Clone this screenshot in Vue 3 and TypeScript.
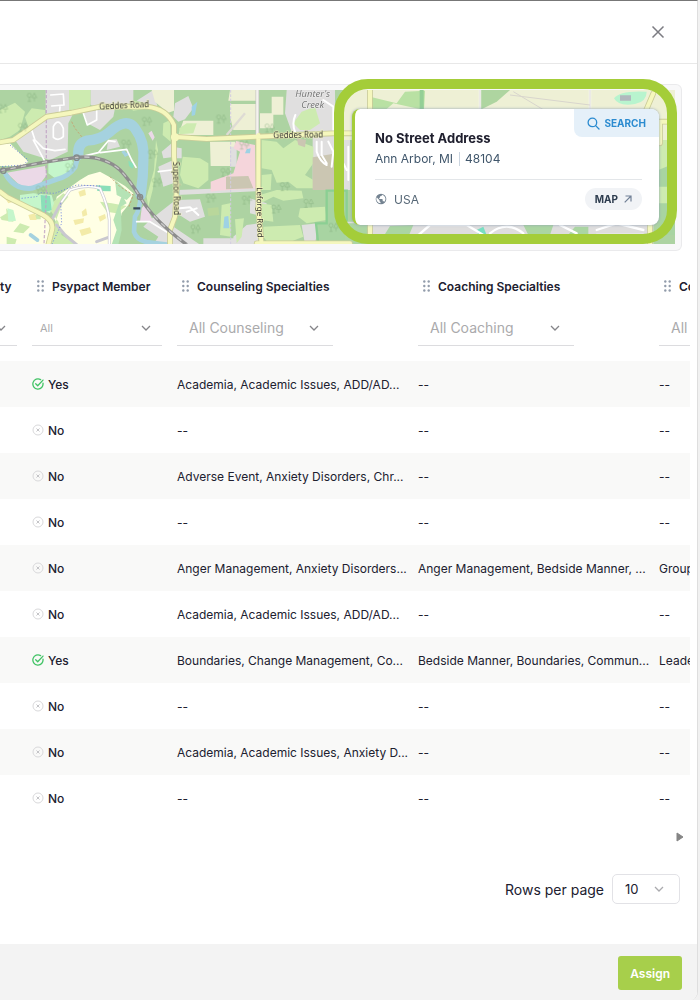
<script setup lang="ts">
import { ref } from 'vue'

interface ProviderRow {
  psypact: boolean
  counseling: string
  coaching: string
  consulting: string
}

interface FilterColumn {
  id: string
  title: string
  placeholder: string
  small?: boolean
}

const columns: FilterColumn[] = [
  { id: 'psypact', title: 'Psypact Member', placeholder: 'All', small: true },
  { id: 'counseling', title: 'Counseling Specialties', placeholder: 'All Counseling' },
  { id: 'coaching', title: 'Coaching Specialties', placeholder: 'All Coaching' },
  { id: 'more', title: 'Co', placeholder: 'All' },
]

const none = '--'
const rows: ProviderRow[] = [
  { psypact: true, counseling: 'Academia, Academic Issues, ADD/AD...', coaching: none, consulting: none },
  { psypact: false, counseling: none, coaching: none, consulting: none },
  { psypact: false, counseling: 'Adverse Event, Anxiety Disorders, Chr...', coaching: none, consulting: none },
  { psypact: false, counseling: none, coaching: none, consulting: none },
  { psypact: false, counseling: 'Anger Management, Anxiety Disorders...', coaching: 'Anger Management, Bedside Manner, ...', consulting: 'Group' },
  { psypact: false, counseling: 'Academia, Academic Issues, ADD/AD...', coaching: none, consulting: none },
  { psypact: true, counseling: 'Boundaries, Change Management, Co...', coaching: 'Bedside Manner, Boundaries, Commun...', consulting: 'Leade' },
  { psypact: false, counseling: none, coaching: none, consulting: none },
  { psypact: false, counseling: 'Academia, Academic Issues, Anxiety D...', coaching: none, consulting: none },
  { psypact: false, counseling: none, coaching: none, consulting: none },
]

const pageSize = ref('10')
</script>

<template>
  <main class="dialog">
    <header class="dialog-head">
      <button class="close" type="button" aria-label="Close">
        <svg width="14" height="14" viewBox="0 0 14 14"><path d="M1.500 1.500 12.500 12.500M12.500 1.500 1.500 12.500" fill="none" stroke="#7c7c82" stroke-width="1.500" /></svg>
      </button>
    </header>

    <section class="map-panel">
      <div class="map">
        <svg class="tiles" viewBox="0 30 2025 464" preserveAspectRatio="xMinYMin slice" aria-hidden="true">
          <rect y="30" width="2100" height="470" fill="#add3a2" />
          <!-- west: fields and housing -->
          <g fill="#cdebb0">
            <path d="M0 90 45 68 75 95 60 150 30 170 0 180ZM75 112 95 85 135 90V105L85 140Z" />
            <path d="M207 30H272V72L262 90H207ZM372 72 400 62 440 70 436 86 400 92Z" />
            <path d="M490 130 510 120 512 185 488 165ZM468 180 474 210 458 330 445 380 440 350 462 270Z" />
          </g>
          <g fill="#e0dfdf">
            <path d="M137 30H207V90L137 105ZM272 30H400V70L290 80 272 75Z" />
            <path d="M95 140 140 112 220 100 205 130 203 215 150 240 70 215 45 180Z" />
            <path d="M250 95 345 85 340 110 300 150 262 130ZM410 62 460 30 475 90 500 110 475 82Z" />
            <path d="M325 180 350 178 360 200 320 210ZM485 215 515 190V232L490 235ZM475 260 520 240V310L490 320Z" />
            <path d="M450 420 520 365 530 390 515 494H460L475 470 430 440ZM505 430 600 494H505Z" />
          </g>
          <path d="M455 30H522V92L505 98 465 66Z" fill="#eef0d5" />
          <!-- campus -->
          <g fill="#ffffe5">
            <path d="M0 193 30 190 85 245 68 258 0 258Z" />
            <path d="M0 335 70 372 155 425 150 494H0ZM170 350 210 322 240 300 265 285 300 275 345 300 375 318 400 340 385 375 365 400 345 494H225L185 460 160 410Z" />
          </g>
          <g fill="#cdebb0">
            <path d="M185 375 205 350 190 340 160 365 150 390 175 425 185 465 230 494H150L165 430ZM140 494 188 468 220 494Z" />
            <path d="M0 412 20 400 18 385 40 410 40 425 5 420ZM60 430 90 440 70 460 40 455ZM20 470 50 478 45 494H20ZM98 405H122V418H98ZM300 365 335 370 380 378 350 400 320 395Z" />
          </g>
          <g fill="#b5e3b5">
            <path d="M345 300 395 345 380 360 350 345ZM366 345 380 370 362 380 365 450 355 494H335L350 450 340 420Z" />
          </g>
          <g fill="#f3eba9">
            <path d="M235 335 255 328 258 345 240 350ZM245 395 258 385 262 405 248 410ZM220 420 252 415 250 428 225 435ZM238 450 270 442 275 458 245 468ZM295 410 315 402 318 415 300 425ZM15 355 30 350 40 365 25 370ZM85 405 105 400 110 420 90 420Z" />
          </g>
          <g fill="#c5f6cb">
            <path d="M145 245 215 240 228 262 200 290 175 302 145 280ZM60 345 100 340 155 345 162 370 150 400 115 385 60 368ZM22 385 40 390 48 422 25 425Z" />
          </g>
          <path d="M122 345 150 348 155 390 125 400ZM290 316 332 318V334L292 333ZM385 242 402 252 398 266 387 258Z" fill="#8adfb9" />
          <path d="M20 278 135 258 140 285 120 312 80 325 55 312Z" fill="#ebd9e7" />
          <path d="M425 385 435 372 458 420 450 425 420 425ZM445 160 455 152 464 172 458 182Z" fill="#ebd9e7" />
          <!-- river -->
          <g fill="none" stroke="#a5d2df" stroke-linecap="round" stroke-linejoin="round">
            <path d="M18 285Q45 330 95 325Q135 310 170 298Q205 290 225 262L235 225" stroke-width="15" />
            <path d="M235 225Q232 190 260 182Q300 180 330 155Q380 110 405 145Q435 185 430 240Q430 290 422 345" stroke-width="31" />
            <path d="M422 345Q420 390 405 410L402 455Q410 480 440 486L500 494" stroke-width="14" />
            <path d="M92 465 112 480" stroke-width="12" />
          </g>
          <path d="M368 213 380 228M372 225 385 222" stroke="#a5d2df" stroke-width="10" />
          <!-- streets -->
          <g fill="none" stroke="#c9c8cf" stroke-width="9" stroke-linecap="round" stroke-linejoin="round">
            <path d="M185 365 210 330Q260 312 300 325Q325 380 328 420V494M185 365 150 430M170 435 195 465 230 494M325 472 290 485" />
          </g>
          <g fill="none" stroke="#fff" stroke-width="5" stroke-linecap="round" stroke-linejoin="round">
            <path d="M152 45 190 42 192 75 155 78M180 80 178 105M160 140Q175 110 190 145V170Q175 185 160 172ZM95 150 105 180 130 205 165 212 195 208M100 180 135 245" />
            <path d="M250 100 262 135 290 120V88M245 230 295 218 325 182 345 185M300 218 350 212 380 208 395 240 408 262M410 425 450 425 515 465M475 275 515 270M185 365 210 330Q260 312 300 325Q325 380 328 420V494" />
          </g>
          <path d="M30 195 85 240 70 255 0 260M65 355 110 350 120 338 165 340 230 315 300 318M182 370 185 430 155 494" fill="none" stroke="#6d84df" stroke-width="3" stroke-dasharray="3 6" />
          <path d="M215 125 225 145 245 170M330 290 360 320 400 345 385 385" fill="none" stroke="#c3a878" stroke-width="3" stroke-dasharray="7 5" />
          <path d="M139 30V340L132 494" fill="none" stroke="#c0a3c4" stroke-width="4" stroke-dasharray="10 5" opacity=".8" />

          <!-- middle: farms, Leforge Road -->
          <g fill="#eef0d5">
            <path d="M690 30H768V62H685ZM690 72H768V150H700L690 110ZM815 50H850V104H815ZM550 122H640V165H535ZM630 185H705V258H632ZM780 100H820V145H780Z" />
          </g>
          <g fill="#e0dfdf">
            <path d="M525 70 565 48 580 85 555 118 535 125 520 110ZM860 30H1005V155H875L855 100ZM690 260H710V200H690ZM530 330 770 322V334L530 345ZM530 360 600 358 615 410 570 425 530 400Z" />
            <path d="M750 355 800 370 795 410 750 400ZM740 435 775 430V494H700V470ZM905 435 955 430 945 494H915ZM515 200 545 205 545 235H520ZM610 475H700V494H610Z" />
            <path d="M938 165H1050V330H1015V494H990V325H938Z" />
          </g>
          <g fill="#cdebb0">
            <path d="M548 230 600 235 625 250 625 300 595 325 550 310 540 285ZM785 180 830 185 850 205 885 180 940 200V250L915 285 940 300V325H890L865 305 830 308 815 270 785 265ZM785 285 815 282 812 330H785Z" />
            <path d="M780 345 830 330 905 332 910 355 850 362 820 350 785 368ZM900 385 975 380 980 420 920 430 895 410ZM780 370 815 375 820 425 785 420ZM705 418 732 415 725 470 710 490ZM665 375 690 370 692 470 660 465ZM790 440 900 435 910 470 860 490H805L790 470Z" />
            <path d="M905 95 945 80 960 130 930 150H900L880 130Z" />
            <path d="M538 145 560 130 590 130 580 160 538 163Z" />
          </g>
          <path d="M632 305 700 280 720 215 700 205 708 183 765 195 768 325 655 332 632 335Z" fill="#f5d5db" />
          <path d="M678 290 745 288 760 325 678 328ZM890 175 918 180 915 202 895 195ZM938 232 1010 220V330H938Z" fill="#cbc6b2" />
          <path d="M622 385 655 382 658 405 625 408Z" fill="#b9d79b" />
          <path d="M948 430H980V332H1040V494H955Z" fill="#a8d4a2" stroke="#8bcf93" stroke-width="7" />
          <path d="M575 80 592 65 585 105 575 108ZM740 208 752 205 750 220 735 220ZM673 410 685 408 688 445 670 445ZM525 335 540 330V345H525Z" fill="#9ed2e4" />
          <g fill="none" stroke="#fff" stroke-width="6" stroke-linecap="round" stroke-linejoin="round">
            <path d="M886 105Q875 130 885 155M950 185V215Q960 245 980 255M965 185V225L980 250M985 185 1000 215 995 260M970 60 1000 80V165M540 385 570 382 595 405M560 395 590 385M1020 195V230L1040 270M1045 200V300" />
          </g>
          <path d="M692 30V494" stroke="#d2cce0" stroke-width="3" stroke-dasharray="8 5" />
          <path d="M680 165 735 100" stroke="#dedbd4" stroke-width="7" />

          <!-- east: around the address card -->
          <path d="M1030 30H1440V180H1030ZM1440 30H2025V200H1440Z" fill="#eef0d5" />
          <path d="M1110 50 1190 70 1215 35 1275 32 1272 90 1180 70 1145 100 1110 90Z" fill="#b9e1a3" />
          <path d="M1440 30H1530L1490 65 1440 90Z" fill="#aed5a0" />
          <path d="M1842 55Q1860 30 1940 35Q1940 65 1905 72Q1855 80 1842 55Z" fill="#b8f4ce" />
          <path d="M1860 46H1893V62H1860Z" fill="#b1b8bd" />
          <path d="M1265 30V95M1980 130V260" stroke="#94cf96" stroke-width="12" />
          <path d="M1970 180H2025V375H1970Z" fill="#cdebb0" />
          <path d="M1975 270 2025 250V320H1970ZM1975 370H2025V465H1975Z" fill="#a8d4a2" />
          <path d="M1035 425H1960V494H1035Z" fill="#dedddd" />
          <path d="M1035 430H1110V494H1035ZM1170 438 1240 435 1225 470H1150ZM1570 435H1660L1650 465H1585ZM1725 440H1765V470H1700Z" fill="#abd5a2" />
          <path d="M1430 450 1450 440 1460 465H1435Z" fill="#79dec2" />
          <g fill="none" stroke="#fff" stroke-width="7" stroke-linecap="round">
            <path d="M1250 470 1290 435H1400L1450 465M1470 460Q1520 420 1570 460M1680 435 1730 460M1790 450 1850 430 1930 450M1790 465H1930M1860 465V480M1885 465V480M1910 465V480M1440 30V100M1770 30V100" />
          </g>
          <path d="M1440 30V100M1770 30V100M1540 35 1640 95M1530 45 1770 75" fill="none" stroke="#d8d5cd" stroke-width="3" />

          <!-- main roads -->
          <g fill="none" stroke-linecap="round" stroke-linejoin="round">
            <g stroke="#cbcc98" stroke-width="17">
              <path d="M0 187 40 180 90 145 140 110 215 98 300 80 440 80Q500 85 522 135V230L530 330 525 410 510 450V494" />
              <path d="M520 170 620 177 770 170 1000 160 1110 160M775 165V390L785 494M0 335 20 350 130 405Q165 425 155 455L145 494M1110 30V500M1960 40 1930 110M1960 125H2025M1980 130V190M1950 430V494M770 490H1050" />
            </g>
            <path d="M772 30V165" stroke="#c6c4c4" stroke-width="11" />
            <path d="M772 30V165" stroke="#f4f2ee" stroke-width="7" />
            <g stroke="#f5f7bd" stroke-width="12">
              <path d="M0 187 40 180 90 145 140 110 215 98 300 80 440 80Q500 85 522 135V230L530 330 525 410 510 450V494" />
              <path d="M520 170 620 177 770 170 1000 160 1110 160M775 165V390L785 494M0 335 20 350 130 405Q165 425 155 455L145 494M1110 30V500M1960 40 1930 110M1960 125H2025M1980 130V190M1950 430V494M770 490H1050" />
            </g>
            <circle cx="525" cy="172" r="12" fill="#f5f7bd" stroke="none" />
          </g>
          <!-- railway -->
          <path d="M0 272 130 247 230 232Q310 225 360 270Q385 295 420 350Q455 415 560 494" fill="none" stroke="#8d8d8d" stroke-width="10" />
          <path d="M0 272 130 247 230 232Q310 225 360 270Q385 295 420 350Q455 415 560 494" fill="none" stroke="#c9c9c9" stroke-width="4" stroke-dasharray="16 16" />
          <g fill="none" stroke="#858b8b" stroke-width="4"><circle cx="10" cy="272" r="8" /><circle cx="230" cy="233" r="8" /><circle cx="420" cy="351" r="8" /></g>
          <path d="M400 385H421" stroke="#39495a" stroke-width="7" />

          <!-- woodland marks -->
          <g fill="none" stroke="#83ae7b" stroke-width="2" opacity=".65">
            <g v-for="(p, i) in [[95,50],[8,84],[68,140],[378,190],[440,122],[458,220],[470,305],[122,328],[210,260],[663,115],[808,142],[732,193],[676,275],[632,352],[740,358],[586,445],[854,318],[925,368],[828,385],[1000,440]]" :key="i" :transform="`translate(${p[0]} ${p[1]})`">
              <circle cx="-7" cy="-4" r="6" /><path d="M-7 2V14M-12 14H-2M8 -11 1 3H15ZM8 3V14" />
            </g>
          </g>

          <!-- labels -->
          <g class="road-label">
            <text x="298" y="88" transform="rotate(-3 298 88)">Geddes Road</text>
            <text x="820" y="175" transform="rotate(-1 820 175)">Geddes Road</text>
            <text x="518" y="245" transform="rotate(89 518 245)">Superior Road</text>
            <text x="770" y="322" transform="rotate(89 770 322)">Leforge Road</text>
          </g>
          <g class="place-label">
            <text x="938" y="52">Hunter's</text>
            <text x="938" y="85">Creek</text>
          </g>
        </svg>

        <div class="highlight"></div>

        <article class="address-card">
          <button class="search" type="button">
            <svg width="13" height="13" viewBox="0 0 13 13"><g fill="none" stroke="#2b8bd0" stroke-width="1.300" stroke-linecap="round"><circle cx="5.400" cy="5.400" r="4.300" /><path d="m8.600 8.600 3.400 3.400" /></g></svg>
            SEARCH
          </button>
          <h2>No Street Address</h2>
          <p class="city"><span>Ann Arbor, MI</span><span class="zip">48104</span></p>
          <div class="card-foot">
            <span class="country">
              <svg width="12" height="12" viewBox="0 0 12 12"><circle cx="6" cy="6" r="5.300" fill="#748391" /><path d="M1.700 4.300 4.500 7.200V8.200L5.500 9V10.300A4.400 4.400 0 0 1 1.700 4.300ZM7 1.700V2.300L6 3.300H5V4.400L4.200 5V5.900H7L7.700 6.600V8.200H8.700L9.400 8.800A4.400 4.400 0 0 0 7 1.700Z" fill="#fff" /></svg>
              USA
            </span>
            <a class="map-link" href="#map">
              MAP
              <svg width="8" height="8" viewBox="0 0 8 8"><path d="M.7 7.300 7 1M1.500 1H7V6.500" fill="none" stroke="#718096" stroke-width="1.200" /></svg>
            </a>
          </div>
        </article>
      </div>
    </section>

    <div class="table-scroll">
      <table>
        <colgroup>
          <col class="col-edge" />
          <col class="col-member" />
          <col class="col-wide" />
          <col class="col-wide" />
          <col class="col-wide" />
        </colgroup>
        <thead>
          <tr class="titles">
            <th class="edge" scope="col">ty</th>
            <th v-for="c in columns" :key="c.id" scope="col">
              <span class="title">
                <svg width="7" height="12" viewBox="0 0 7 12" fill="#929cab"><circle v-for="n in 6" :key="n" :cx="n % 2 ? 1.300 : 5.700" :cy="1.500 + Math.floor((n - 1) / 2) * 4.500" r="1.200" /></svg>
                <span :id="`title-${c.id}`">{{ c.title }}</span>
              </span>
            </th>
          </tr>
          <tr class="filters">
            <td class="edge">
              <span class="edge-filter">
                <svg class="chevron" width="10" height="6" viewBox="0 0 10 6"><path d="m1 1 4 4 4-4" /></svg>
              </span>
            </td>
            <td v-for="c in columns" :key="c.id">
              <span class="filter" :class="{ small: c.small }">
                <select :aria-labelledby="`title-${c.id}`"><option>{{ c.placeholder }}</option></select>
                <svg class="chevron" width="10" height="6" viewBox="0 0 10 6"><path d="m1 1 4 4 4-4" /></svg>
              </span>
            </td>
          </tr>
        </thead>
        <tbody>
          <tr v-for="(r, i) in rows" :key="i">
            <td></td>
            <td>
              <span class="member">
                <svg v-if="r.psypact" width="12" height="12" viewBox="0 0 12 12" fill="none" stroke="#41c365" stroke-width="1.300" stroke-linecap="round" stroke-linejoin="round"><path d="M11 5.200A5.100 5.100 0 1 1 8.600 1.600" /><path d="m3.700 5.800 2 2 5.300-5.700" /></svg>
                <svg v-else width="12" height="12" viewBox="0 0 12 12" fill="none" stroke="#d9d9db"><circle cx="6" cy="6" r="5" /><path d="m4.500 4.500 3 3m0-3-3 3" stroke="#c4c4c7" /></svg>
                {{ r.psypact ? 'Yes' : 'No' }}
              </span>
            </td>
            <td>{{ r.counseling }}</td>
            <td>{{ r.coaching }}</td>
            <td>{{ r.consulting }}</td>
          </tr>
        </tbody>
      </table>
    </div>

    <div class="scroll-row">
      <button type="button" aria-label="Scroll right">
        <svg width="8" height="10" viewBox="0 0 8 10"><path d="M1 1 7 5 1 9Z" fill="#858585" stroke="#858585" stroke-linejoin="round" /></svg>
      </button>
    </div>

    <div class="pager">
      <label for="page-size">Rows per page</label>
      <span class="page-size">
        <select id="page-size" v-model="pageSize"><option>10</option><option>25</option></select>
        <svg class="chevron" width="10" height="6" viewBox="0 0 10 6"><path d="m1 1 4 4 4-4" /></svg>
      </span>
    </div>

    <footer class="dialog-foot">
      <button class="assign" type="button">Assign</button>
    </footer>
  </main>
</template>

<style>
body {
  margin: 0;
  background: #f1f1f1;
}
</style>

<style scoped>
* {
  box-sizing: border-box;
}

.dialog {
  display: flex;
  flex-direction: column;
  min-height: 100vh;
  margin-right: 2px;
  overflow: hidden;
  background: #fff;
  border-top: 1px solid #777;
  border-right: 1px solid #dedede;
  border-bottom-right-radius: 8px;
  font-family: Inter, "Liberation Sans", sans-serif;
  font-size: 12px;
  color: #20202f;
}

button,
select {
  font: inherit;
  color: inherit;
}

button {
  padding: 0;
  border: 0;
  background: none;
}

svg {
  display: block;
  flex: none;
}

.dialog-head {
  display: flex;
  align-items: center;
  justify-content: flex-end;
  height: 63px;
  padding-right: 32px;
  border-bottom: 1px solid #e8e8e8;
}

.map-panel {
  margin: 20px 15px 0 0;
  padding: 5px 6px 6px 0;
  background: #f8f8f9;
  border: solid #eaeaec;
  border-width: 1px 1px 1px 0;
  border-radius: 0 6px 6px 0;
}

.map {
  position: relative;
  height: 154px;
}

.tiles {
  width: 100%;
  height: 100%;
}

.road-label,
.place-label {
  font-family: "Noto Sans", sans-serif;
  fill: #333;
  stroke: #f5f7bd;
  stroke-width: 3px;
  paint-order: stroke;
}

.road-label {
  font-size: 24px;
}

.place-label {
  font-size: 28px;
  font-style: italic;
  text-anchor: middle;
  fill: #777;
  stroke: #eee;
}

.highlight {
  position: absolute;
  top: -11px;
  right: -2px;
  bottom: 0;
  width: 343px;
  border: 10px solid #a4cd39;
  border-radius: 34px;
}

.address-card {
  position: absolute;
  top: 19px;
  right: 16px;
  width: 307px;
  padding: 20px 17px 15px 20px;
  background: #fff;
  border-left: 3px solid #a4cd39;
  border-radius: 8px;
  box-shadow: 0 0 3px #8fa0b4;
}

.search {
  position: absolute;
  top: 0;
  right: 0;
  display: flex;
  align-items: center;
  gap: 4px;
  height: 28px;
  padding: 0 13px;
  background: #e5f0f9;
  border-radius: 0 8px 0 8px;
  font-size: 10px;
  font-weight: 700;
  color: #2b8bd0;
}

h2 {
  margin: 0;
  font-size: 13px;
  line-height: 18px;
  font-weight: 700;
}

.city {
  display: flex;
  align-items: center;
  gap: 6px;
  margin: 4px 0 0;
  line-height: 16px;
  color: #40566b;
}

.zip {
  padding-left: 5px;
  border-left: 1px solid #cbd5e0;
  line-height: 14px;
}

.card-foot {
  display: flex;
  align-items: center;
  justify-content: space-between;
  margin-top: 12px;
  padding-top: 8px;
  border-top: 1px solid #e3e6e9;
}

.country {
  display: flex;
  align-items: center;
  gap: 7px;
  color: #566776;
}

.map-link {
  display: flex;
  align-items: center;
  gap: 6px;
  height: 22px;
  padding: 0 10px;
  background: #f1f3f6;
  border-radius: 11px;
  font-size: 10px;
  font-weight: 700;
  color: #2d3c4e;
  text-decoration: none;
}

.table-scroll {
  margin: 17px 7px 0 0;
  overflow: hidden;
}

table {
  width: 892px;
  table-layout: fixed;
  border-collapse: collapse;
}

.col-edge {
  width: 24px;
}

.col-member {
  width: 145px;
}

.col-wide {
  width: 241px;
}

th,
td {
  padding: 0 8px;
  text-align: left;
  white-space: nowrap;
}

.titles th {
  height: 36px;
  font-size: 12px;
  font-weight: 600;
}

th.edge,
td.edge {
  padding: 0;
}

.title {
  display: flex;
  align-items: center;
  gap: 8px;
  padding-left: 5px;
}

.filters td {
  height: 57px;
  padding-top: 6px;
  padding-bottom: 15px;
}

.filter {
  display: flex;
  align-items: center;
  width: 156px;
  height: 36px;
  padding-right: 14px;
  border-bottom: 1px solid #dcdcdf;
  color: #aaaaac;
  font-size: 14px;
}

.filter select {
  flex: 1;
  min-width: 0;
  height: 35px;
  padding: 0 0 0 12px;
  appearance: none;
  background: none;
  border: 0;
}

.filter.small {
  width: 130px;
  padding-right: 11px;
  font-size: 11px;
}

.filter.small select {
  padding-left: 8px;
}

.edge-filter {
  display: flex;
  align-items: center;
  width: 17px;
  height: 36px;
  margin: 6px 0 15px;
  padding-right: 11px;
  justify-content: flex-end;
  border-bottom: 1px solid #dcdcdf;
}

td.edge {
  overflow: hidden;
}

.filters td.edge {
  padding: 0;
}

.chevron {
  fill: none;
  stroke: #858589;
  stroke-width: 1.3px;
}

tbody td {
  height: 46px;
}

tbody tr:nth-child(odd) {
  background: #f9f9f8;
}

.member {
  display: flex;
  align-items: center;
  gap: 4px;
  font-weight: 500;
}

.scroll-row {
  display: flex;
  justify-content: flex-end;
  padding: 11px 13px 0 0;
}

.pager {
  display: flex;
  align-items: center;
  justify-content: flex-end;
  gap: 8px;
  margin-top: 32px;
  padding-right: 17px;
  font-size: 14px;
}

.page-size {
  display: flex;
  align-items: center;
  width: 68px;
  height: 30px;
  padding-right: 15px;
  border: 1px solid #e2e2e6;
  border-radius: 5px;
  font-size: 13px;
}

.page-size select {
  flex: 1;
  min-width: 0;
  height: 28px;
  padding: 0 0 0 12px;
  appearance: none;
  background: none;
  border: 0;
}

.page-size .chevron {
  stroke: #aaaaae;
}

.dialog-foot {
  display: flex;
  justify-content: flex-end;
  margin-top: auto;
  padding: 12px 15px 10px;
  background: #f3f3f3;
}

.assign {
  height: 34px;
  padding: 0 12px;
  background: #a7cf4b;
  border-radius: 3px;
  color: #fff;
  font-weight: 600;
}
</style>
